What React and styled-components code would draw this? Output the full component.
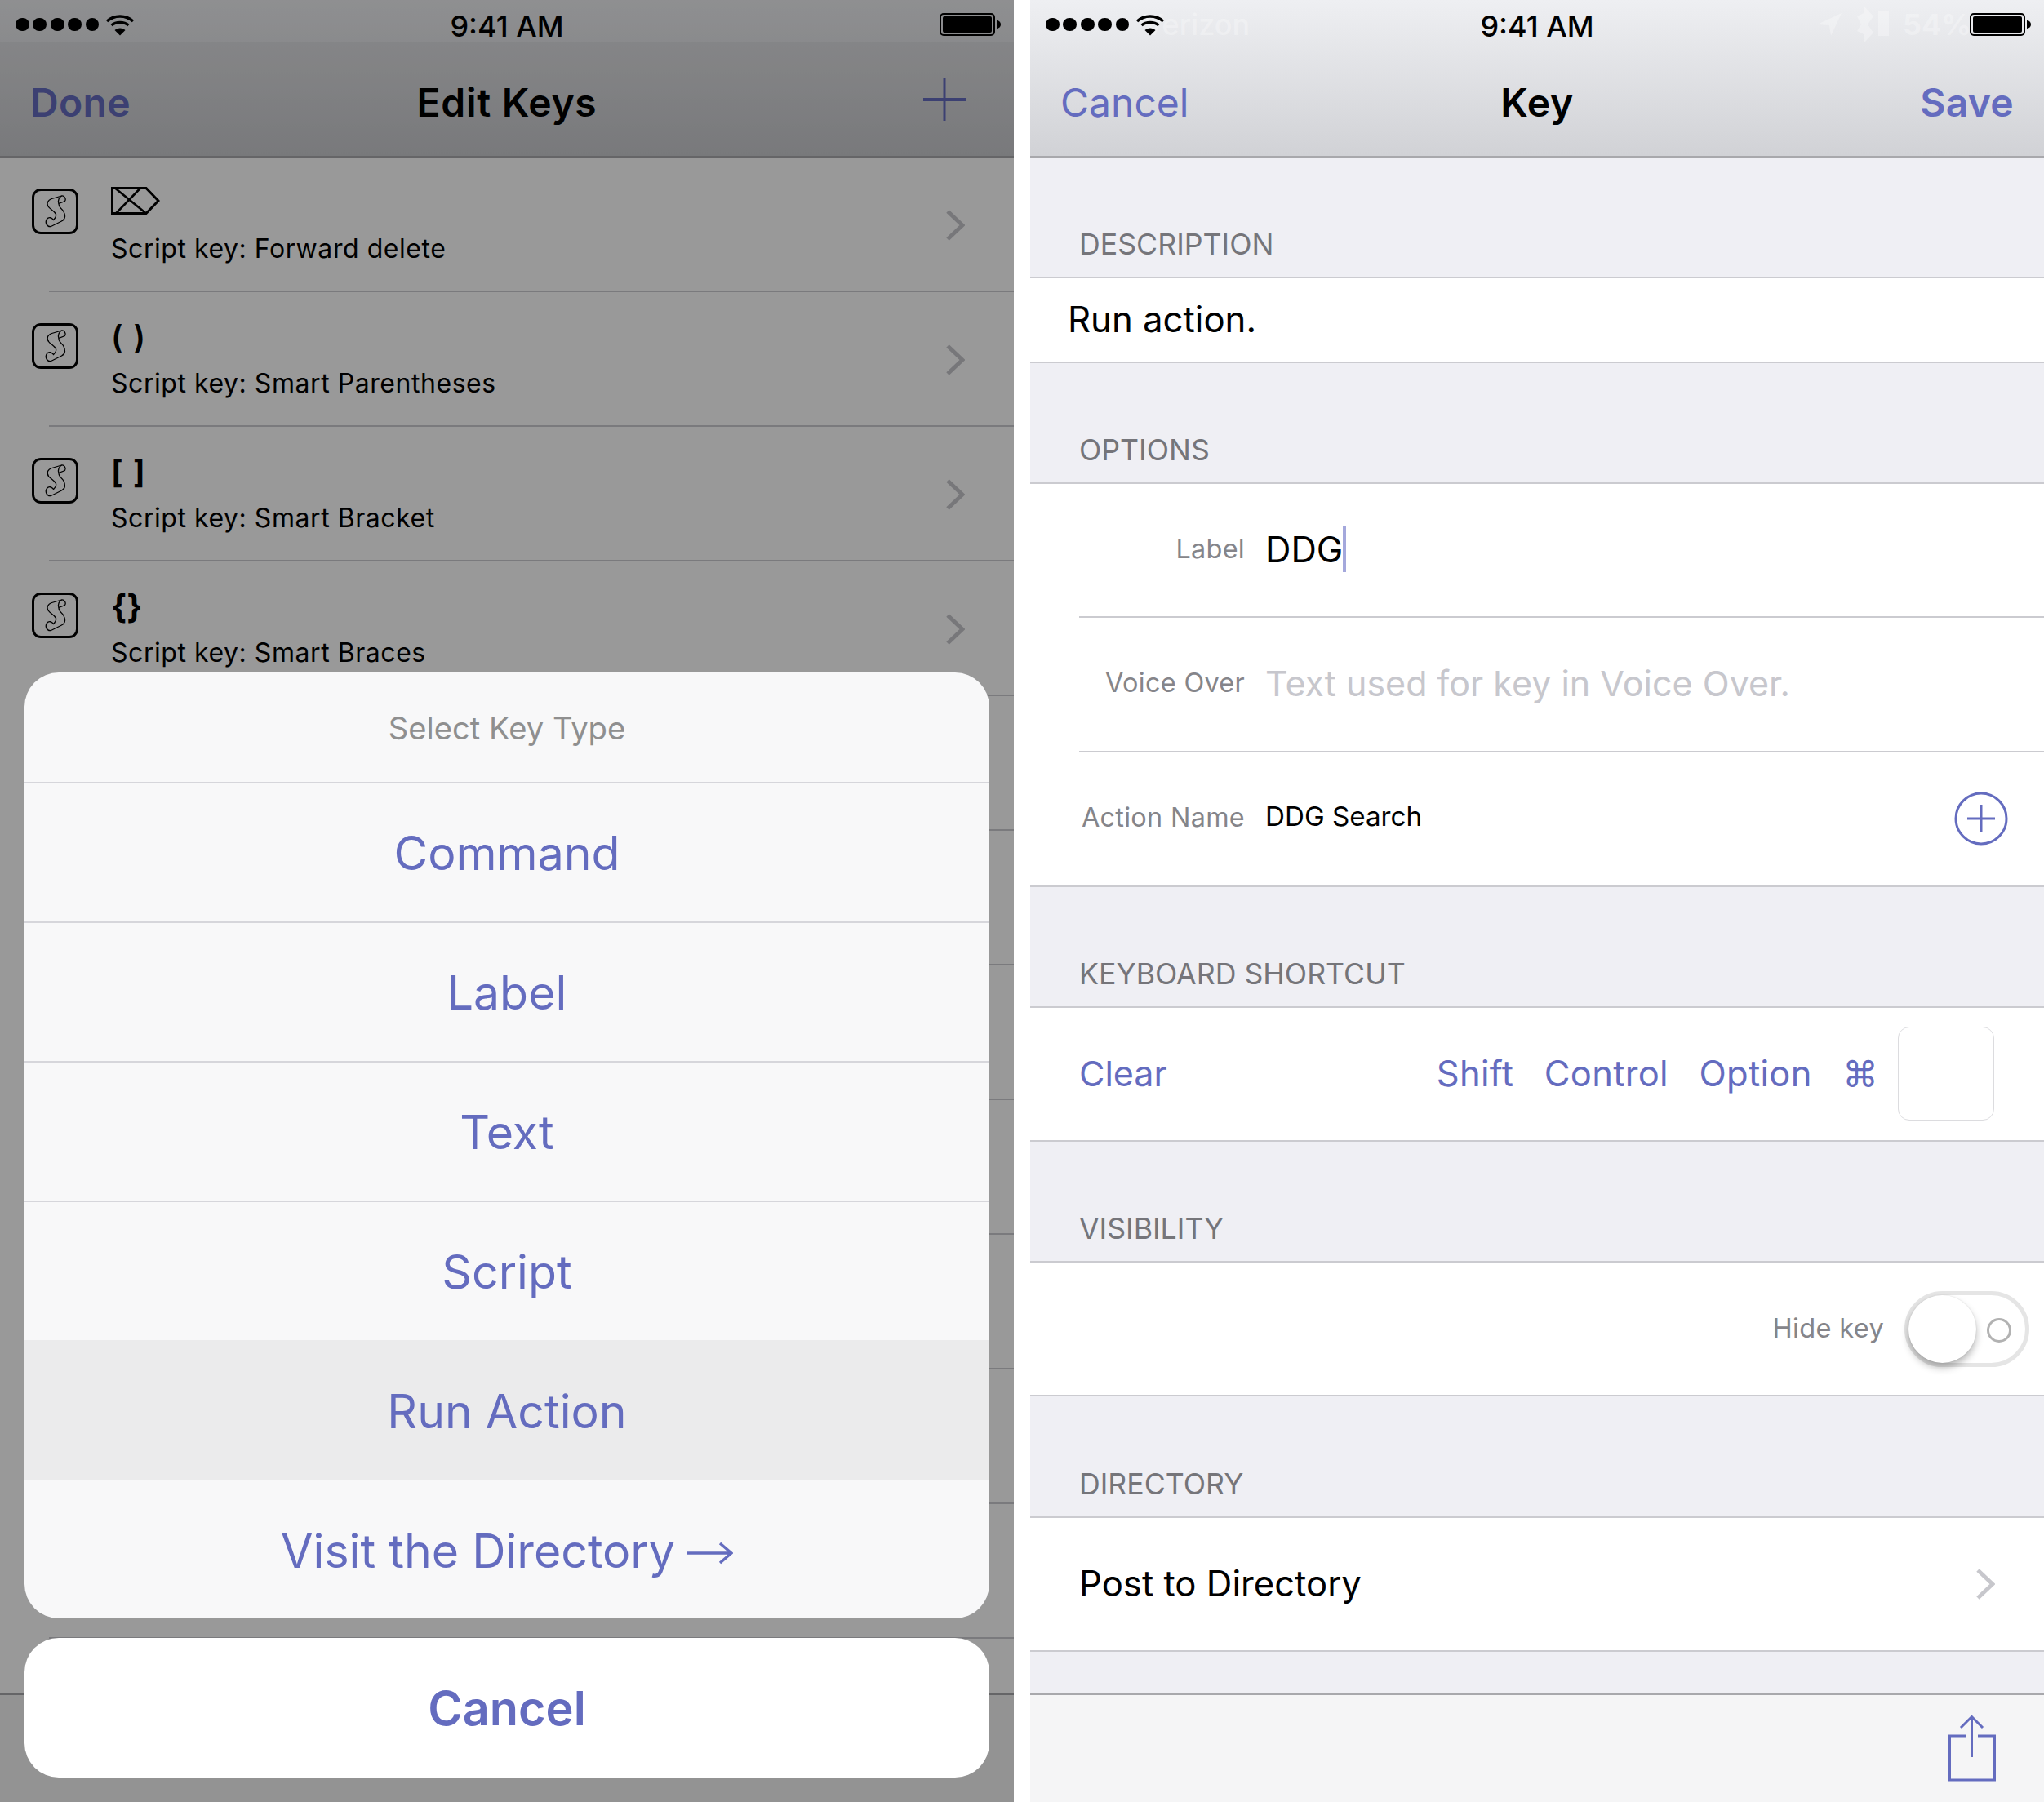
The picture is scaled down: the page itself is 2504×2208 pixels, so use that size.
import React from "react";
import styled, { createGlobalStyle } from "styled-components";

const ACCENT = "#646cbf";
const LINE = "#cbcbd0";

const Global = createGlobalStyle`
  html, body { margin: 0; padding: 0; background: #fff; }
  body { font-family: Inter, "Liberation Sans", sans-serif; color: #000; }
  * { box-sizing: border-box; }
`;

const Page = styled.div`
  width: 2504px; height: 2208px; display: flex; gap: 20px; overflow: hidden; background: #fff;
`;
const Phone = styled.div`
  position: relative; width: 1242px; height: 2208px; display: flex; flex-direction: column;
  overflow: hidden; background: ${p => p.$bg};
`;
const Header = styled.header`
  height: 193px; flex: none; display: flex; flex-direction: column;
  background: linear-gradient(180deg, #eeeff2 0%, #d1d2d6 100%);
  border-bottom: 2px solid #a8a8ac;
`;
const StatusBar = styled.div`
  position: relative; height: 52px; flex: none; display: flex; align-items: center; justify-content: space-between;
  padding: 8px 17px 0 19px;
`;
const Signal = styled.div`position: relative; display: flex; align-items: center; gap: 4.6px;`;
const Dot = styled.span`width: 16.8px; height: 16.8px; border-radius: 50%; background: #000;`;
const WifiMark = styled.svg`margin: 1px 0 0 3px; display: block;`;
const Time = styled.div`
  position: absolute; left: 0; right: 0; top: 12px; text-align: center;
  font-size: 36px; line-height: 40px; font-weight: 500;
`;
const Ghost = styled.span`
  position: absolute; top: 8px; left: ${p => p.$left}px; font-size: 36px; line-height: 44px; font-weight: ${p => p.$weight || 500};
  color: rgba(255,255,255,.3);
`;
const GhostMark = styled.svg`
  position: absolute; top: 8px; left: ${p => p.$left}px; fill: rgba(255,255,255,.3);
`;
const Battery = styled.div`
  position: relative; width: 68px; height: 28px; border: 2px solid #000; border-radius: 5px; padding: 2px; margin-right: 6px;
  &::after { content: ""; position: absolute; right: -9px; top: 7px; width: 5px; height: 10px; background: #000; border-radius: 0 5px 5px 0; }
`;
const BatteryFill = styled.div`width: 100%; height: 100%; background: #000; border-radius: 2px;`;
const NavBar = styled.div`
  flex: 1; display: grid; grid-template-columns: 1fr auto 1fr; align-items: center; padding: 8px 37px 0 37px;
  background: ${p => p.$shade ? "rgba(0,0,0,.035)" : "transparent"};
`;
const NavTitle = styled.div`font-size: 48px; line-height: 60px; font-weight: 600; letter-spacing: 0.7px;`;
const NavLink = styled.div`
  font-size: 48px; line-height: 60px; font-weight: ${p => p.$strong ? 600 : 400}; color: ${ACCENT};
  letter-spacing: ${p => p.$strong ? "0.3px" : "0"};
  justify-self: ${p => p.$end ? "end" : "start"};
`;
const PlusMark = styled.svg`display: block; margin-top: -8px; margin-right: 22px;`;
const List = styled.div`flex: 1; overflow: hidden;`;
const KeyRow = styled.div`
  position: relative; height: 165px; display: flex; padding: 38px 60px 0 39px;
  &::after { content: ""; position: absolute; left: 60px; right: 0; bottom: 0; height: 2px; background: ${LINE}; }
`;
const KeyIcon = styled.div`
  width: 57px; height: 56px; flex: none; border: 3.5px solid #000; border-radius: 11px; display: flex; align-items: center; justify-content: center;
`;
const KeyText = styled.div`flex: 1; margin-left: 40px; margin-top: -4px;`;
const KeyGlyph = styled.div`
  height: 42px; display: flex; align-items: center; font-size: ${p => p.$size || 38}px; line-height: 42px;
  font-weight: ${p => p.$weight || 600}; word-spacing: 3px; padding-bottom: ${p => p.$lift || 0}px;
`;
const KeySub = styled.div`margin-top: 14px; font-size: 32px; line-height: 44px; letter-spacing: 0.55px;`;
const Disclosure = styled.svg`flex: none; align-self: center; margin-top: ${p => p.$inline ? 0 : -38}px;`;

const Toolbar = styled.div`
  height: 133px; flex: none; background: #f5f5f6; border-top: 2px solid #a8a8ac; display: flex; justify-content: flex-end;
  padding: 24px 59px 0 0;
`;
const Dim = styled.div`position: absolute; inset: 0; background: rgba(0,0,0,.4);`;
const Sheet = styled.div`
  position: absolute; left: 30px; right: 30px; bottom: 30px; display: flex; flex-direction: column; gap: 24px;
`;
const SheetGroup = styled.div`
  background: #f8f8f9; border-radius: 42px; overflow: hidden;
`;
const SheetTitle = styled.div`
  height: 134px; display: flex; align-items: center; justify-content: center; font-size: 38.2px; color: #8f8f8f; padding-top: 2px;
`;
const SheetItem = styled.div`
  height: ${p => p.$h || 171}px; display: flex; align-items: center; justify-content: center; font-size: 57.2px; color: ${ACCENT};
  padding-top: 2px;
  background: ${p => p.$active ? "#ebebec" : "transparent"};
  border-top: 2px solid ${p => p.$flat ? "transparent" : "#d6d6db"};
`;
const ArrowMark = styled.svg`margin: 6px 0 0 15px; flex: none;`;
const SheetCancel = styled.div`
  height: 171px; background: #fff; border-radius: 42px; display: flex; align-items: center; justify-content: center;
  font-size: 57.6px; font-weight: 600; color: ${ACCENT};
`;

const SectionHead = styled.div`
  height: ${p => p.$h || 148}px; flex: none; display: flex; align-items: flex-end; padding: 0 0 18px 60px;
  border-bottom: 2px solid ${LINE}; font-size: 35.7px; line-height: 44px; color: #75757a;
`;
const Cell = styled.div`
  height: ${p => p.$h || 164}px; flex: none; background: #fff; border-bottom: 2px solid ${LINE};
  display: flex; align-items: center; justify-content: ${p => p.$end ? "flex-end" : "flex-start"};
  padding: ${p => p.$pad || "0 0 0 61px"};
`;
const Plain = styled.div`font-size: 43.7px; line-height: 56px;`;
const OptionGroup = styled.div`flex: none; background: #fff;`;
const OptionRow = styled.div`
  height: ${p => p.$h}px; border-bottom: 2px solid ${LINE}; display: flex; align-items: center;
  margin-left: ${p => p.$last ? 0 : 60}px; padding: 0 44px 3px ${p => p.$last ? 60 : 0}px;
`;
const OptionLabel = styled.div`
  width: 203px; flex: none; text-align: right; white-space: nowrap; font-size: 32.4px; line-height: 44px; color: #85858a; margin-right: 25px; letter-spacing: .3px;
`;
const OptionValue = styled.div`
  flex: 1; display: flex; align-items: center; font-size: ${p => p.$size}px; line-height: 56px;
  color: ${p => p.$muted ? "#c7c7cd" : "#000"}; margin-top: ${p => p.$shift || 0}px;
`;
const Caret = styled.span`width: 4px; height: 56px; margin-left: 0; background: #a4a8dc;`;
const RoundPlus = styled.svg`flex: none; margin-top: 2px;`;
const ClearLink = styled.div`font-size: 43px; line-height: 56px; color: ${ACCENT};`;
const ModifierLink = styled.div`
  font-size: 43.5px; line-height: 56px; letter-spacing: .3px; color: ${ACCENT}; margin-left: ${p => p.$first ? 0 : 37.5}px;
`;
const Grow = styled.div`flex: 1;`;
const KeyBox = styled.div`
  width: 118px; height: 115px; border: 1.5px solid #dcdcdf; border-radius: 14px; margin-left: 24px;
`;
const HideLabel = styled.div`font-size: 32.6px; line-height: 44px; color: #85858a; letter-spacing: .3px; margin: -3px 25px 0 0;`;
const Switch = styled.div`
  position: relative; width: 153px; height: 93px; border: 5px solid #e5e5e5; border-radius: 47px;
`;
const Knob = styled.div`
  position: absolute; left: 0; top: 0; width: 83px; height: 83px; border-radius: 50%; background: #fff;
  box-shadow: 0 6px 10px rgba(0,0,0,.28), 0 0 2px rgba(0,0,0,.12);
`;
const OffMark = styled.div`
  position: absolute; right: 17px; top: 28px; width: 30px; height: 30px; border: 3px solid #b2b2b2; border-radius: 50%;
`;
const Spacer = styled.div`flex: 1;`;

const Wifi = () => (
  <WifiMark width="36" height="26" viewBox="0 0 36 26">
    <path d="M2 8 C11 0 25 0 34 8" fill="none" stroke="#000" strokeWidth="3.4" />
    <path d="M7.5 13 C13 8.4 23 8.4 28.5 13" fill="none" stroke="#000" strokeWidth="3.4" />
    <path d="M11.5 19 L18 25.5 L24.5 19 C21 15.6 15 15.6 11.5 19 Z" fill="#000" />
  </WifiMark>
);

const Status = ({ ghost }) => (
  <StatusBar>
    {ghost && <Ghost $left={138}>Verizon</Ghost>}
    {ghost && (
      <GhostMark $left={964} width="30" height="36" viewBox="0 0 30 36">
        <path d="M30 8 L0 22 L15 23 L17 36 Z" />
      </GhostMark>
    )}
    {ghost && (
      <GhostMark $left={1009} width="44" height="44" viewBox="0 0 44 44">
        <path d="M4 12 L12 8 L13 0 L24 12 L17 22 L24 32 L13 44 L12 34 L4 30 L9 22 Z M30 6 H43 V36 H30 Z" />
      </GhostMark>
    )}
    {ghost && <Ghost $left={1069} $weight={700}>54%</Ghost>}
    <Signal>
      {[0, 1, 2, 3, 4].map(i => <Dot key={i} />)}
      <Wifi />
    </Signal>
    <Time>9:41 AM</Time>
    <Battery><BatteryFill /></Battery>
  </StatusBar>
);

const ScrollIcon = () => (
  <svg width="49" height="49" viewBox="3.5 3.5 49 49" fill="none" stroke="#000" strokeWidth="1.3">
    <path d="M36 8.5 L24 12 C19 13.5 17 18 20 22 C22 25 27 27 29 31 C30 34 28 36 26 38 C24 35 20 34 18 37 C15 41 18 47 23 46 L36 39.5 C41 37 41 32 38 27 C36 24 32 22 32.5 18 L40 15 C42 12 39 8 36 8.5 Z" />
    <path d="M36 8.5 C33 10 31 14 32.5 18" />
  </svg>
);

const ForwardDelete = () => (
  <svg width="60" height="34" viewBox="0 0 60 34" fill="none" stroke="#000" strokeWidth="3">
    <path d="M1.5 1.5 H43 L58 17 L43 32.5 H1.5 Z" />
    <path d="M5 1.5 L43 32.5 M36 1.5 L6 32.5" strokeWidth="2.6" />
  </svg>
);

const Chevron = ({ color, inline }) => (
  <Disclosure $inline={inline} width="24" height="40" viewBox="0 0 24 40">
    <path d="M3 3 L21 20 L3 37" fill="none" stroke={color} strokeWidth="5" />
  </Disclosure>
);

const Share = () => (
  <svg width="58" height="82" viewBox="0 0 58 82" fill="none" stroke={ACCENT} strokeWidth="3">
    <path d="M21 26 H1.5 V80 H56.5 V26 H36" />
    <path d="M28.5 52 V2 M15 16 L28.5 2.5 L42 16" />
  </svg>
);

const Arrow = () => (
  <ArrowMark width="56" height="28" viewBox="0 0 56 28" fill="none" stroke={ACCENT} strokeWidth="3.5">
    <path d="M0 14 H53 M40 2 L54 14 L40 26" />
  </ArrowMark>
);

const keys = [
  { glyph: <ForwardDelete />, sub: "Script key: Forward delete", lift: 4 },
  { glyph: "( )", sub: "Script key: Smart Parentheses", size: 39 },
  { glyph: "[ ]", sub: "Script key: Smart Bracket", size: 39, weight: 700 },
  { glyph: "{}", sub: "Script key: Smart Braces", size: 41, weight: 700 },
];
const blanks = [5, 6, 7, 8, 9, 10, 11];

export default function App() {
  return (
    <Page>
      <Global />
      <Phone $bg="#fff">
        <Header>
          <Status />
          <NavBar $shade>
            <NavLink $strong>Done</NavLink>
            <NavTitle>Edit Keys</NavTitle>
            <NavLink $end>
              <PlusMark width="52" height="52" viewBox="0 0 52 52" fill="none" stroke={ACCENT}>
                <path d="M26 0 V52" strokeWidth="3" /><path d="M0 26 H52" strokeWidth="4" />
              </PlusMark>
            </NavLink>
          </NavBar>
        </Header>
        <List>
          {keys.map(k => (
            <KeyRow key={k.sub}>
              <KeyIcon><ScrollIcon /></KeyIcon>
              <KeyText>
                <KeyGlyph $size={k.size} $weight={k.weight} $lift={k.lift}>{k.glyph}</KeyGlyph>
                <KeySub>{k.sub}</KeySub>
              </KeyText>
              <Chevron color="#c7c7cc" />
            </KeyRow>
          ))}
          {blanks.map(b => <KeyRow key={b} />)}
        </List>
        <Toolbar />
        <Dim />
        <Sheet>
          <SheetGroup>
            <SheetTitle>Select Key Type</SheetTitle>
            <SheetItem>Command</SheetItem>
            <SheetItem>Label</SheetItem>
            <SheetItem>Text</SheetItem>
            <SheetItem>Script</SheetItem>
            <SheetItem $active $flat>Run Action</SheetItem>
            <SheetItem $flat $h={170}>Visit the Directory<Arrow /></SheetItem>
          </SheetGroup>
          <SheetCancel>Cancel</SheetCancel>
        </Sheet>
      </Phone>
      <Phone $bg="#efeff4">
        <Header>
          <Status ghost />
          <NavBar>
            <NavLink>Cancel</NavLink>
            <NavTitle>Key</NavTitle>
            <NavLink $strong $end>Save</NavLink>
          </NavBar>
        </Header>
        <SectionHead>DESCRIPTION</SectionHead>
        <Cell $h={104} $pad="0 0 0 46px"><Plain>Run action.</Plain></Cell>
        <SectionHead>OPTIONS</SectionHead>
        <OptionGroup>
          <OptionRow $h={164}>
            <OptionLabel>Label</OptionLabel>
            <OptionValue $size={43.5}>DDG<Caret /></OptionValue>
          </OptionRow>
          <OptionRow $h={165}>
            <OptionLabel>Voice Over</OptionLabel>
            <OptionValue $size={43} $muted>Text used for key in Voice Over.</OptionValue>
          </OptionRow>
          <OptionRow $h={165} $last>
            <OptionLabel>Action Name</OptionLabel>
            <OptionValue $size={33.2} $shift={-4}>DDG Search</OptionValue>
            <RoundPlus width="66" height="66" viewBox="0 0 66 66" fill="none" stroke={ACCENT} strokeWidth="3">
              <circle cx="33" cy="33" r="31" /><path d="M33 16 V50 M16 33 H50" />
            </RoundPlus>
          </OptionRow>
        </OptionGroup>
        <SectionHead>KEYBOARD SHORTCUT</SectionHead>
        <Cell $pad="0 61px 2px 60px">
          <ClearLink>Clear</ClearLink>
          <Grow />
          <ModifierLink $first>Shift</ModifierLink>
          <ModifierLink>Control</ModifierLink>
          <ModifierLink>Option</ModifierLink>
          <ModifierLink>⌘</ModifierLink>
          <KeyBox />
        </Cell>
        <SectionHead>VISIBILITY</SectionHead>
        <Cell $pad="0 18px 0 0" $end>
          <HideLabel>Hide key</HideLabel>
          <Switch><OffMark /><Knob /></Switch>
        </Cell>
        <SectionHead $h={149}>DIRECTORY</SectionHead>
        <Cell $pad="0 60px 0 60px">
          <Plain>Post to Directory</Plain>
          <Grow />
          <Chevron color="#c7c7cc" inline />
        </Cell>
        <Spacer />
        <Toolbar><Share /></Toolbar>
      </Phone>
    </Page>
  );
}
